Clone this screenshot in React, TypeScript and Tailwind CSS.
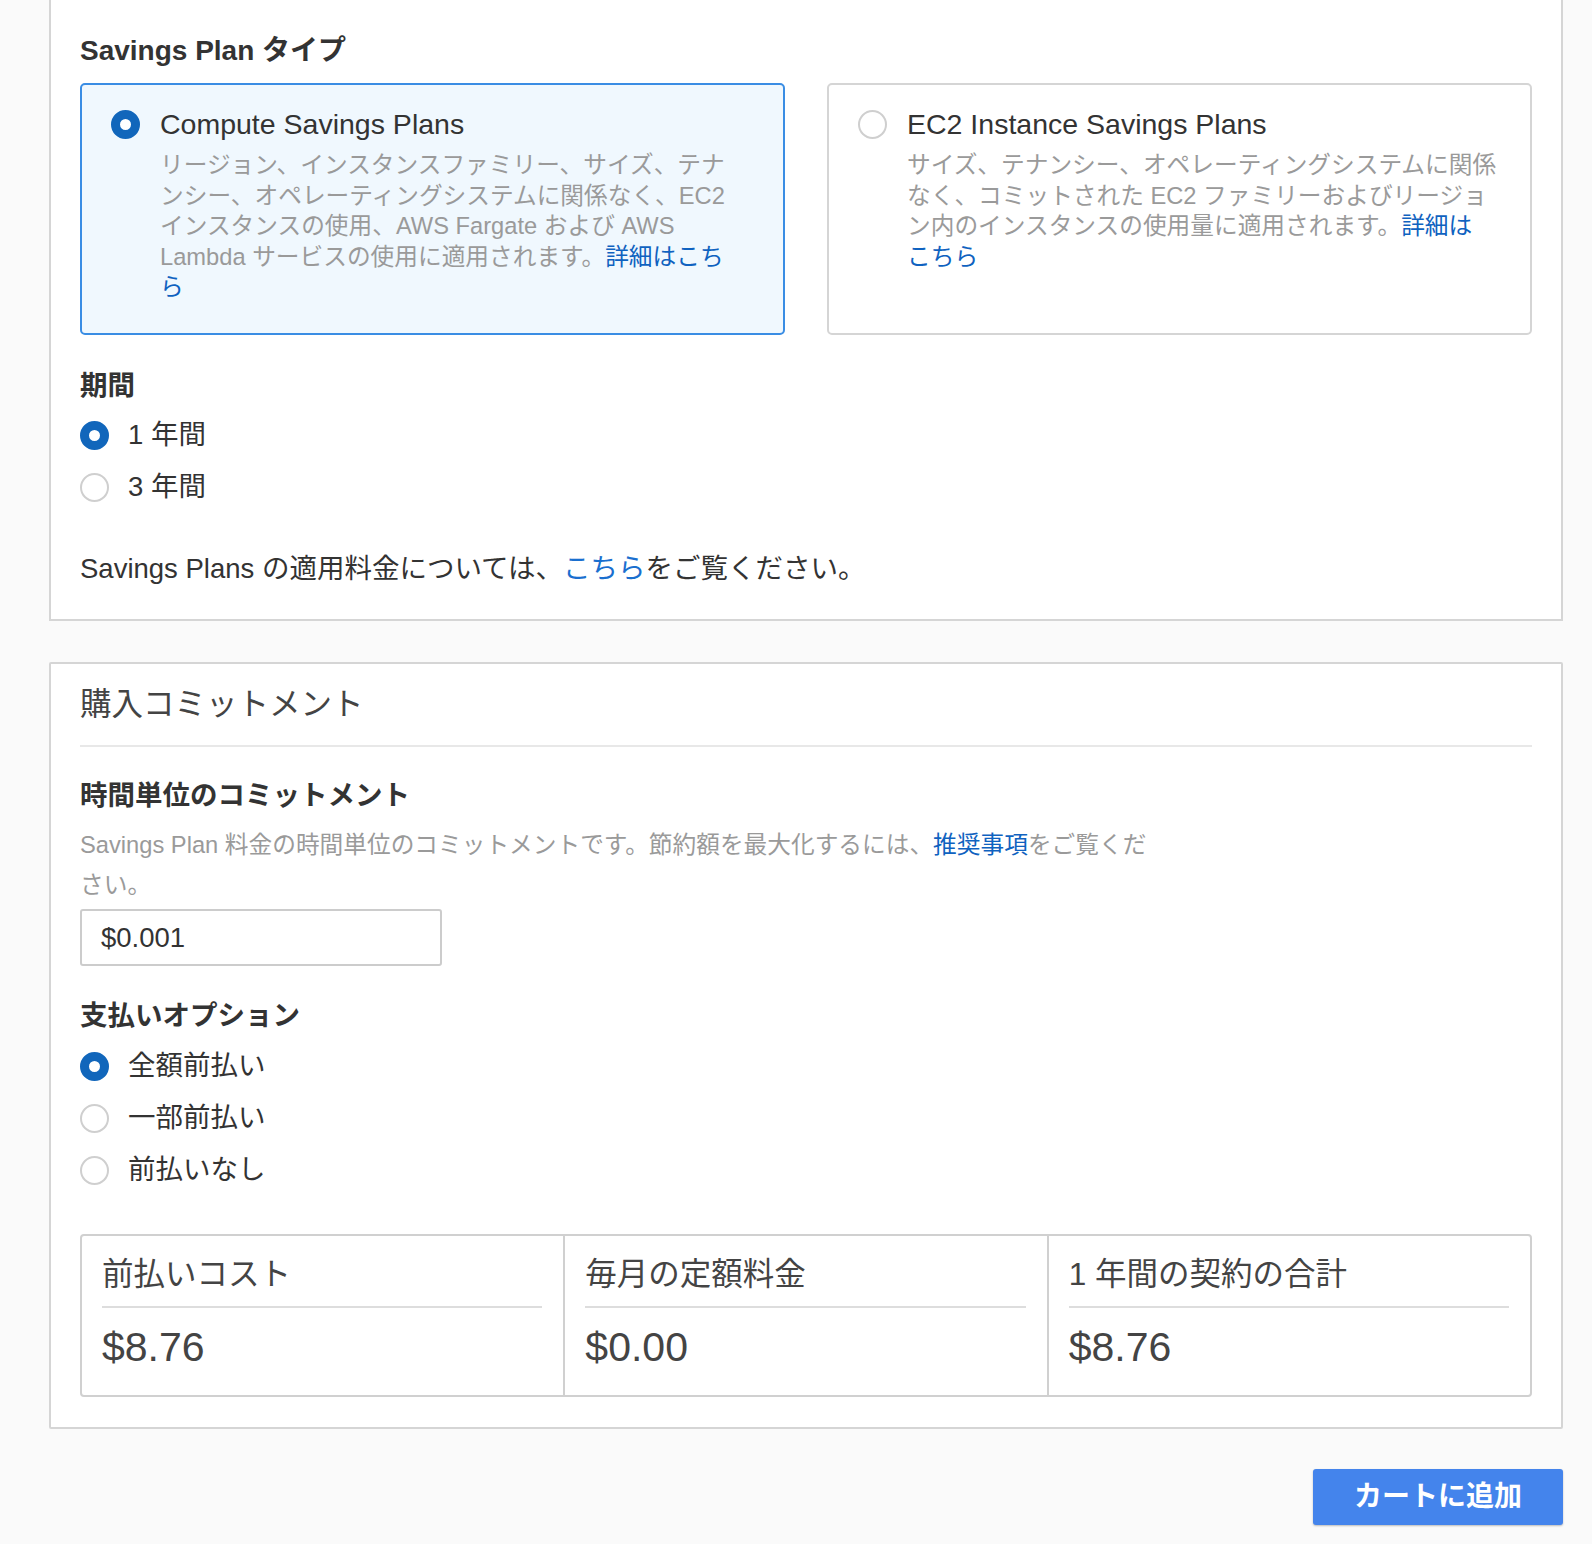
import React from 'react';

const font = { fontFamily: '"Liberation Sans", "Noto Sans CJK JP", sans-serif' };

const Radio = ({ checked }: { checked: boolean }) =>
  checked ? (
    <span className="w-[29px] h-[29px] rounded-full border-[9px] border-[#1166bb] bg-white shrink-0 block" />
  ) : (
    <span className="w-[29px] h-[29px] rounded-full border-2 border-[#cfcfcf] bg-white shrink-0 block" />
  );

const RadioRow = ({ checked, label }: { checked: boolean; label: string }) => (
  <div className="flex items-center h-[52px]">
    <Radio checked={checked} />
    <span className="ml-[19px] text-[27.5px] leading-[36px] text-[#333]">{label}</span>
  </div>
);

const PlanCard = ({
  selected,
  title,
  children,
}: {
  selected: boolean;
  title: string;
  children: React.ReactNode;
}) => (
  <div
    className={`flex-1 h-[252px] rounded-[5px] border-2 pl-[29px] pt-[22px] ${
      selected ? 'border-[#3a8de4] bg-[#f0f8fe]' : 'border-[#d5d5d5] bg-white'
    }`}
  >
    <div className="flex items-start">
      <div className="pt-[3px]">
        <Radio checked={selected} />
      </div>
      <div className="ml-[20px] w-[600px]">
        <div className="text-[28.5px] leading-[34px] text-[#333]">{title}</div>
        <p className="mt-[9px] text-[23.7px] leading-[30.5px] text-[#9a9a9a] whitespace-nowrap">{children}</p>
      </div>
    </div>
  </div>
);

const Stat = ({ label, value, last }: { label: string; value: string; last?: boolean }) => (
  <div className={`flex-1 pl-[20px] pr-[21px] pt-[18px] pb-[23px] ${last ? '' : 'border-r-2 border-[#d0d0d0]'}`}>
    <div className="text-[31.5px] leading-[40px] text-[#444] pb-[12px] border-b-2 border-[#dddddd]">{label}</div>
    <div className="mt-[14px] text-[41px] leading-[50px] text-[#444]">{value}</div>
  </div>
);

export default function App() {
  return (
    <div className="min-h-screen bg-[#fafafa] pl-[49px] pr-[29px] pb-[40px]" style={font}>
      {/* Savings Plan type */}
      <section className="bg-white border-2 border-t-0 border-[#d5d5d5] px-[29px] pt-[33px] pb-[32px]">
        <h2 className="text-[28px] leading-[36px] font-bold text-[#333]">Savings Plan タイプ</h2>
        <div className="flex gap-[42px] mt-[14px]">
          <PlanCard selected title="Compute Savings Plans">
            リージョン、インスタンスファミリー、サイズ、テナ
            <br />
            ンシー、オペレーティングシステムに関係なく、EC2
            <br />
            インスタンスの使用、AWS Fargate および AWS
            <br />
            Lambda サービスの使用に適用されます。
            <span className="text-[#0f62c0]">
              詳細はこち
              <br />ら
            </span>
          </PlanCard>
          <PlanCard selected={false} title="EC2 Instance Savings Plans">
            サイズ、テナンシー、オペレーティングシステムに関係
            <br />
            なく、コミットされた EC2 ファミリーおよびリージョ
            <br />
            ン内のインスタンスの使用量に適用されます。
            <span className="text-[#0f62c0]">
              詳細は
              <br />
              こちら
            </span>
          </PlanCard>
        </div>

        <h3 className="mt-[33px] text-[27.5px] leading-[36px] font-bold text-[#333]">期間</h3>
        <div className="mt-[5px]">
          <RadioRow checked label="1 年間" />
          <RadioRow checked={false} label="3 年間" />
        </div>

        <p className="mt-[38px] text-[27.5px] leading-[36px] text-[#333]">
          Savings Plans の適用料金については、<span className="text-[#1a6fcf]">こちら</span>をご覧ください。
        </p>
      </section>

      {/* Purchase commitment */}
      <section className="mt-[41px] bg-white border-2 border-[#d5d5d5] rounded-[2px] px-[29px] pt-[18px] pb-[30px]">
        <h2 className="text-[31.5px] leading-[44px] text-[#444] pb-[19px] border-b-2 border-[#e8e8e8]">
          購入コミットメント
        </h2>

        <h3 className="mt-[31px] text-[27.5px] leading-[36px] font-bold text-[#333]">時間単位のコミットメント</h3>
        <p className="mt-[12px] w-[1080px] text-[23.7px] leading-[39.6px] text-[#9a9a9a]">
          Savings Plan 料金の時間単位のコミットメントです。節約額を最大化するには、
          <span className="text-[#0f62c0]">推奨事項</span>をご覧ください。
        </p>
        <div className="mt-[4px] w-[362px] h-[57px] border-2 border-[#cccccc] rounded-[3px] flex items-center pl-[19px] text-[27.5px] text-[#333]">
          $0.001
        </div>

        <h3 className="mt-[32px] text-[27.5px] leading-[36px] font-bold text-[#333]">支払いオプション</h3>
        <div className="mt-[6px]">
          <RadioRow checked label="全額前払い" />
          <RadioRow checked={false} label="一部前払い" />
          <RadioRow checked={false} label="前払いなし" />
        </div>

        <div className="mt-[38px] flex border-2 border-[#d0d0d0] rounded-[4px]">
          <Stat label="前払いコスト" value="$8.76" />
          <Stat label="毎月の定額料金" value="$0.00" />
          <Stat label="1 年間の契約の合計" value="$8.76" last />
        </div>
      </section>

      <div className="mt-[40px] flex justify-end">
        <button className="w-[250px] h-[56px] rounded-[3px] bg-[#4484ec] text-white text-[28px] font-bold shadow-[0_1px_2px_rgba(0,0,0,0.25)]">
          カートに追加
        </button>
      </div>
    </div>
  );
}
